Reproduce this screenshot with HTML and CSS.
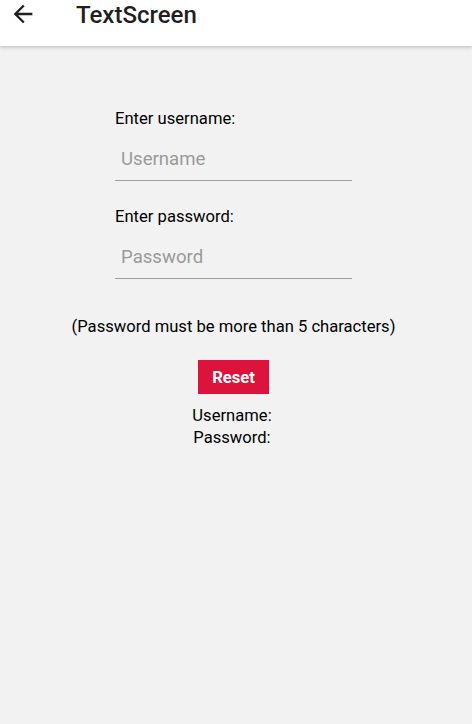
FILE: index.html
```html
<!DOCTYPE html>
<html>
<head>
<meta charset="utf-8">
<link rel="stylesheet" href="styles.css">
</head>
<body>
<header class="appbar">
  <svg class="back" width="28" height="28" viewBox="0 0 24 24"><path d="M20 11H7.83l5.59-5.59L12 4l-8 8 8 8 1.41-1.41L7.83 13H20v-2z" fill="#1f1f1f"/></svg>
  <span class="title">TextScreen</span>
</header>
<main class="content">
  <div class="form">
    <div class="label">Enter username:</div>
    <div class="field"><span class="placeholder">Username</span></div>
    <div class="label">Enter password:</div>
    <div class="field"><span class="placeholder">Password</span></div>
  </div>
  <div class="note">(Password must be more than 5 characters)</div>
  <div class="btn">Reset</div>
  <div class="out">Username:</div>
  <div class="out">Password:</div>
</main>
</body>
</html>
```
FILE: styles.css
```css
html, body { margin: 0; padding: 0; }
body {
  width: 472px;
  height: 724px;
  background: #f2f2f2;
  font-family: Roboto, "Noto Sans", sans-serif;
  color: #000;
  overflow: hidden;
}
.appbar {
  height: 46px;
  background: #fff;
  box-shadow: 0 1px 4px rgba(0,0,0,0.25);
  display: flex;
  align-items: flex-start;
  position: relative;
}
.back { margin: 0 0 0 9px; flex: none; }
.title {
  margin-left: 39px;
  font-size: 24px;
  font-weight: 500;
  color: #1f1f1f;
  line-height: 30px;
}
.content {
  width: 467px;
  display: flex;
  flex-direction: column;
  align-items: center;
  padding-top: 62px;
}
.form { width: 237px; }
.label { font-size: 16.6px; line-height: 22px; }
.field {
  margin-top: 19px;
  height: 32px;
  border-bottom: 1.5px solid #9e9e9e;
  padding-left: 6px;
  margin-bottom: 25px;
  box-sizing: border-box;
}
.placeholder { display: block; font-size: 18.6px; color: #9a9a9a; line-height: 20px; }
.note { font-size: 16.6px; line-height: 22px; margin-top: 12px; }
.btn {
  margin-top: 22px;
  width: 71px;
  height: 34px;
  background: #dc143c;
  color: #fff;
  font-weight: 700;
  font-size: 16.6px;
  display: flex;
  align-items: center;
  justify-content: center;
}
.out { font-size: 16.6px; line-height: 22px; margin-right: 3px; }
.btn + .out { margin-top: 11px; }
```
